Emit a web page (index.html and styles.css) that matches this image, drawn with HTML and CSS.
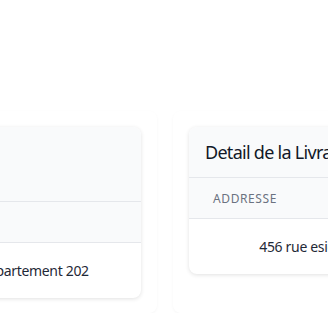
FILE: index.html
```html
<!DOCTYPE html>
<html lang="fr">
<head>
  <meta charset="UTF-8">
  <meta name="viewport" content="width=device-width, initial-scale=1.0">
  <title>Detail de la Livraison</title>
  <link rel="stylesheet" href="styles.css">
</head>
<body>

  <div class="grille">
    <div class="bloc">
      <div class="carte">
        <div class="carte-entete">
          <h2>Client</h2>
          <p class="sous-titre">Adresse principale</p>
        </div>
        <table>
          <thead>
            <tr><th>Addresse</th></tr>
          </thead>
          <tbody>
            <tr><td>123 rue du Lilas, Appartement 202</td></tr>
          </tbody>
        </table>
      </div>
    </div>

    <div class="bloc">
      <div class="carte">
        <div class="carte-entete">
          <h2>Detail de la Livraison</h2>
        </div>
        <table>
          <thead>
            <tr><th>Addresse</th></tr>
          </thead>
          <tbody>
            <tr><td>456 rue esicot, Bâtiment B12</td></tr>
          </tbody>
        </table>
      </div>
    </div>
  </div>

</body>
</html>
```

FILE: styles.css
```css
body {
  font-family: "Noto Sans", "Open Sans", sans-serif;
  background-color: #ffffff;
  color: #1f2937;
  margin: 0;
  padding: 0;
  overflow: hidden;
  letter-spacing: -0.02em;
}
.grille {
  display: grid;
  grid-template-columns: 352px 352px;
  gap: 16px;
  margin-left: -195px;
  padding-top: 111px;
}
.bloc {
  background-color: #ffffff;
  border-radius: 8px;
  padding: 16px;
  height: 170px;
  box-shadow: 0 1px 3px rgba(0, 0, 0, 0.04);
}
.carte {
  background-color: #ffffff;
  border-radius: 8px;
  overflow: hidden;
  box-shadow: 0 1px 4px rgba(0, 0, 0, 0.12);
}
.carte-entete {
  background-color: #f9fafb;
  padding: 13px 16px 12px;
  border-bottom: 1px solid #e5e7eb;
}
.carte-entete h2 {
  margin: 0;
  font-size: 18px;
  line-height: 25px;
  font-weight: 400;
  color: #111827;
  letter-spacing: -0.04em;
}
.sous-titre {
  margin: 0;
  font-size: 14px;
  line-height: 24px;
  color: #6b7280;
}
table {
  width: 100%;
  border-collapse: collapse;
}
th {
  background-color: #f9fafb;
  text-align: left;
  padding: 0 24px;
  height: 40px;
  font-size: 12px;
  font-weight: 400;
  letter-spacing: 0.05em;
  text-transform: uppercase;
  color: #6b7280;
  border-bottom: 1px solid #e5e7eb;
}
td {
  text-align: center;
  padding: 0 24px;
  height: 55px;
  font-size: 14px;
  color: #1f2937;
  white-space: nowrap;
}
```
